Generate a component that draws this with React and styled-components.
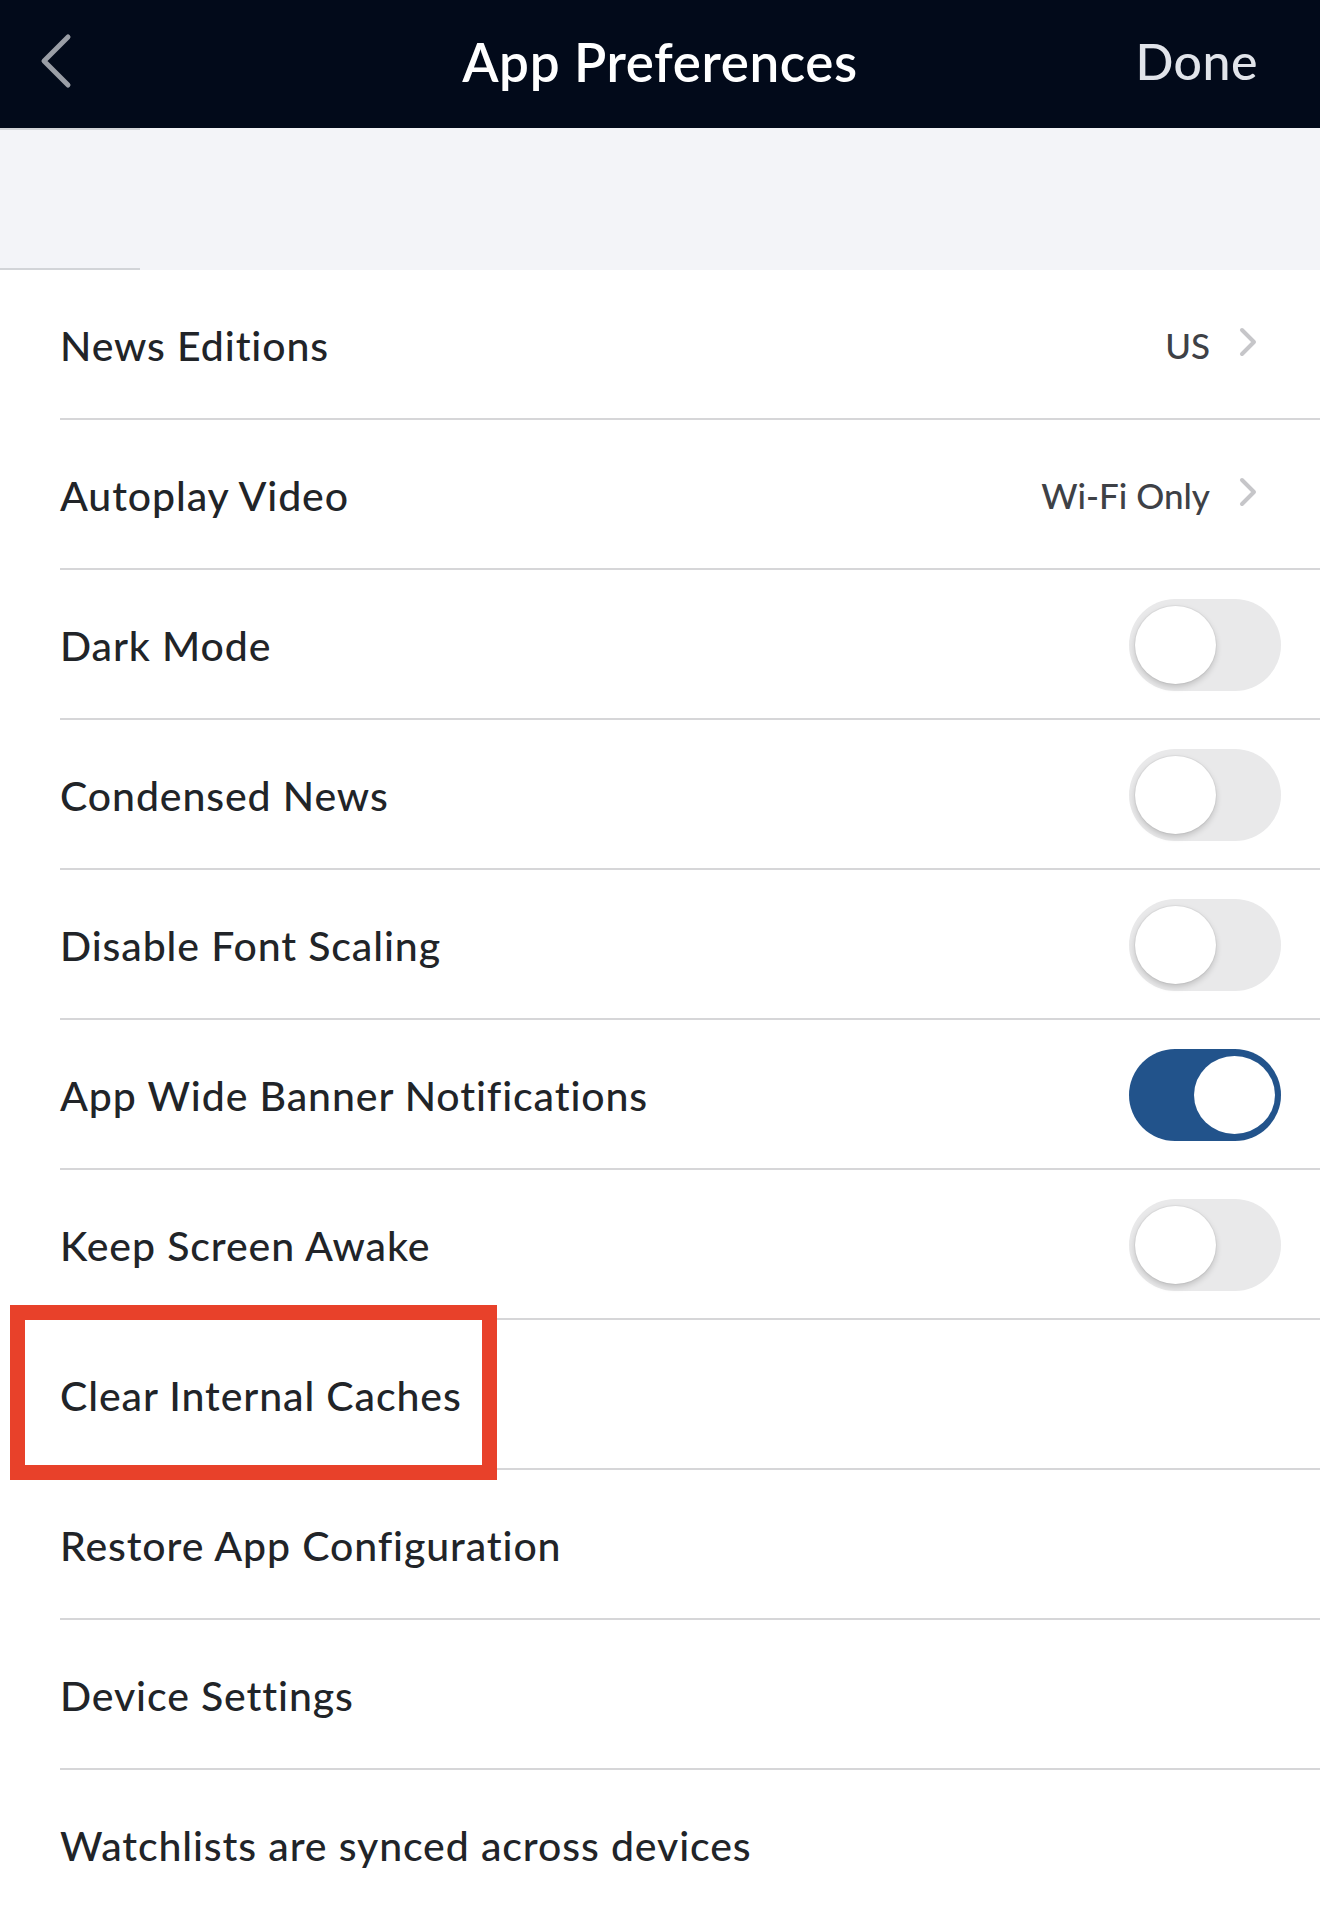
import React from "react";
import styled, { createGlobalStyle } from "styled-components";

const rows = [
  { label: "News Editions", value: "US" },
  { label: "Autoplay Video", value: "Wi-Fi Only" },
  { label: "Dark Mode", toggle: false },
  { label: "Condensed News", toggle: false },
  { label: "Disable Font Scaling", toggle: false },
  { label: "App Wide Banner Notifications", toggle: true },
  { label: "Keep Screen Awake", toggle: false },
  { label: "Clear Internal Caches", marked: true },
  { label: "Restore App Configuration" },
  { label: "Device Settings" },
  { label: "Watchlists are synced across devices" },
];

function App() {
  return (
    <>
      <GlobalStyle />
      <Page>
        <Header>
          <BackButton aria-label="Back">
            <svg width="34" height="56" viewBox="0 0 34 56" fill="none">
              <path
                d="M30 4 L6 28 L30 52"
                stroke="#9a9ea6"
                strokeWidth="5"
                strokeLinecap="round"
                strokeLinejoin="round"
              />
            </svg>
          </BackButton>
          <Title>App Preferences</Title>
          <DoneButton>Done</DoneButton>
        </Header>

        <Spacer>
          <Stub />
          <Stub />
        </Spacer>

        <List>
          {rows.map((row) => (
            <Row key={row.label}>
              <Label>{row.label}</Label>
              {row.value && (
                <Value>
                  {row.value}
                  <svg width="20" height="30" viewBox="0 0 20 30" fill="none">
                    <path
                      d="M4 3 L16 15 L4 27"
                      stroke="#c6c6c9"
                      strokeWidth="4"
                      strokeLinecap="round"
                      strokeLinejoin="round"
                    />
                  </svg>
                </Value>
              )}
              {row.toggle !== undefined && (
                <Switch on={row.toggle}>
                  <Knob on={row.toggle} />
                </Switch>
              )}
              {row.marked && <Marker />}
            </Row>
          ))}
        </List>
      </Page>
    </>
  );
}

const GlobalStyle = createGlobalStyle`
  html, body {
    margin: 0;
    padding: 0;
    background: #ffffff;
  }
  body {
    font-family: Lato, "Noto Sans", "Liberation Sans", sans-serif;
    -webkit-font-smoothing: antialiased;
  }
`;

const Page = styled.div`
  width: 1320px;
  height: 1913px;
  overflow: hidden;
  background: #ffffff;
`;

// Header bar
const Header = styled.header`
  height: 128px;
  background: #020a1a;
  display: grid;
  grid-template-columns: 200px 1fr 200px;
  align-items: center;
  padding-bottom: 6px;
  box-sizing: border-box;
`;

const BackButton = styled.div`
  display: flex;
  align-items: center;
  padding-left: 38px;
`;

const Title = styled.h1`
  margin: 0;
  text-align: center;
  color: #ffffff;
  font-size: 53px;
  font-weight: 600;
  letter-spacing: 0.6px;
`;

const DoneButton = styled.div`
  text-align: right;
  padding-right: 62px;
  color: #e1e4ea;
  font-size: 50px;
  font-weight: 500;
  letter-spacing: 0.5px;
`;

const Spacer = styled.div`
  height: 142px;
  background: #f3f4f8;
  display: flex;
  flex-direction: column;
  justify-content: space-between;
`;

const Stub = styled.div`
  width: 140px;
  height: 2px;
  background: #d2d4d8;
`;

// list rows
const List = styled.div`
  display: flex;
  flex-direction: column;
`;

const Row = styled.div`
  position: relative;
  height: 150px;
  margin-left: 60px;
  display: flex;
  align-items: center;
  justify-content: space-between;
  box-sizing: border-box;
  border-bottom: 2px solid #d6d6d8;
  padding-top: 2px;
`;

const Label = styled.span`
  color: #212428;
  font-size: 41px;
  font-weight: 500;
  letter-spacing: 0.9px;
`;

const Value = styled.span`
  display: flex;
  align-items: center;
  gap: 28px;
  padding-right: 62px;
  color: #3e4146;
  font-size: 35px;
  font-weight: 500;

  svg {
    margin-top: -6px;
  }
`;

const Switch = styled.div`
  width: 152px;
  height: 92px;
  margin-right: 39px;
  border-radius: 46px;
  background: ${({ on }) => (on ? "#22538b" : "#e9e9ea")};
  display: flex;
  align-items: center;
  justify-content: ${({ on }) => (on ? "flex-end" : "flex-start")};
  padding: 0 6px;
  box-sizing: border-box;
`;

const Knob = styled.div`
  width: 81px;
  height: 78px;
  border-radius: 50%;
  background: #ffffff;
  box-shadow: ${({ on }) =>
    on ? "none" : "0 3px 6px rgba(0, 0, 0, 0.18), 0 0 0 1px rgba(0, 0, 0, 0.04)"};
`;

// red annotation box over the caches row
const Marker = styled.div`
  position: absolute;
  left: -50px;
  top: -15px;
  width: 487px;
  height: 175px;
  box-sizing: border-box;
  border: 15px solid #e8412a;
  pointer-events: none;
`;

export default App;
